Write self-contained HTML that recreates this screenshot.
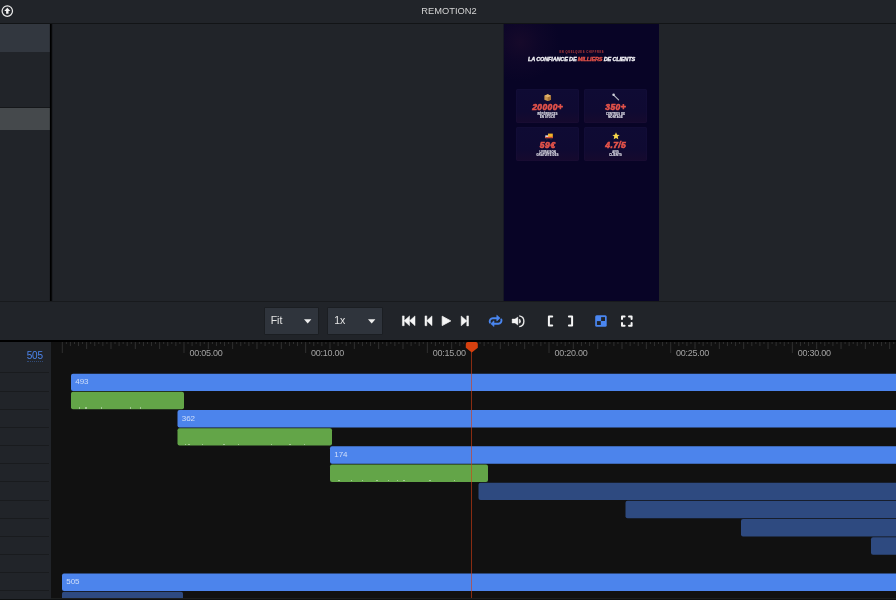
<!DOCTYPE html>
<html><head><meta charset="utf-8">
<style>
*{margin:0;padding:0;box-sizing:border-box}
html,body{width:896px;height:600px;overflow:hidden;background:#212429;font-family:"Liberation Sans",sans-serif}
.abs{position:absolute}
#top{position:absolute;left:0;top:0;width:896px;height:23px;background:#212429}
#topline{position:absolute;left:0;top:23px;width:896px;height:1px;background:#121416}
#title{position:absolute;left:1px;top:5.6px;width:896px;text-align:center;color:#d4d4d4;font-size:9.3px;line-height:10px}
#side{position:absolute;left:0;top:24px;width:50px;height:277px;background:#212429}
#vline{position:absolute;left:49px;top:24px;width:4px;height:277px;background:linear-gradient(90deg,rgba(0,0,0,0.13) 0,rgba(0,0,0,0.13) 1px,#000 1px,#000 2px,#08090a 2px,#08090a 3px,rgba(0,0,0,0.17) 3px,rgba(0,0,0,0.17) 4px)}
#sel1{position:absolute;left:0;top:24px;width:50px;height:28px;background:#32373f}
#hline2{position:absolute;left:0;top:107px;width:50px;height:1px;background:#15171a}
#sel2{position:absolute;left:0;top:108px;width:50px;height:22px;background:#45494c}
#ctlline{position:absolute;left:0;top:301px;width:896px;height:1px;background:#181a1d}

#preview{position:absolute;left:504px;top:24px;width:155px;height:277px;background:#080426;overflow:hidden}
#glow{position:absolute;left:-24px;top:-22px;width:80px;height:80px;border-radius:50%;background:radial-gradient(circle at center, rgba(34,14,46,0.55) 0%, rgba(26,11,46,0.3) 35%, rgba(8,4,38,0) 70%)}
#sub{position:absolute;left:0;top:26.5px;width:155px;text-align:center;color:rgba(214,71,63,0.8);font-size:2.6px;line-height:3px;font-weight:700;letter-spacing:0.6px;text-indent:0.6px;-webkit-text-stroke:0.05px #d6473f;transform:scaleX(1.0);will-change:transform}
#ttl{position:absolute;left:0;top:32px;width:155px;text-align:center;color:#f4f4f8;font-size:5.6px;line-height:6px;font-weight:700;font-style:italic;letter-spacing:-0.2px;white-space:nowrap;-webkit-text-stroke:0.3px currentColor;will-change:transform;transform:scaleY(1.04)}
.card{position:absolute;width:63px;height:34px;border-radius:2px;background:linear-gradient(180deg, rgba(15,11,52,1) 0%, rgba(15,10,50,1) 65%, rgba(22,10,46,1) 100%);box-shadow:inset 0 0 0 0.5px rgba(120,80,160,0.08)}
.emo{position:absolute}
.num{position:absolute;left:0;top:13.9px;width:63px;text-align:center;color:#e4534a;font-size:8.5px;line-height:8.5px;-webkit-text-stroke:0.6px #e4534a;will-change:transform;font-weight:700;font-style:italic;white-space:nowrap}
.lab{position:absolute;left:0;width:63px;text-align:center;color:#e6e6ee;font-size:2.6px;line-height:3px;font-weight:700;white-space:nowrap;letter-spacing:0.25px;text-indent:0.25px;-webkit-text-stroke:0.12px #e6e6ee;will-change:transform}

.dd{position:absolute;top:307.3px;width:55px;height:27.3px;background:#2f343c;border:1px solid #1b1e22;border-radius:1px;color:#e4e4e4;font-size:10.5px;line-height:24.3px;padding-left:6.2px}
.dd svg{position:absolute;right:6px;top:10.6px}
#tlline{position:absolute;left:0;top:340px;width:896px;height:2px;background:#000}
#tl{position:absolute;left:0;top:342px;width:896px;height:256px;background:#111;overflow:hidden}
#tlbottom{position:absolute;left:51px;top:598px;width:845px;height:1px;background:#1d1f1f}
#tlbottom2{position:absolute;left:0;top:599px;width:896px;height:1px;background:#0e1011}
#tlleft{position:absolute;left:0;top:342px;width:51px;height:257px;background:#212429}
.sep{position:absolute;left:0;width:48.5px;height:1px;background:#191b1e}
#ruler{position:absolute;left:0;top:342px}
.lbl{position:absolute;top:348px;color:#a3a3a3;font-size:9px;line-height:10px;letter-spacing:-0.25px}
.btxt{position:absolute;height:18px;font-size:8px;line-height:18px;color:rgba(255,255,255,0.72);white-space:nowrap}
.bar.b{background:#4c84ec}
.bar.g{background:#63a548}
.bar.d{background:#2e4a80}
#playline{position:absolute;left:471px;top:348px;width:1px;height:250px;background:rgba(210,62,20,0.62)}
#num505{position:absolute;left:26.8px;top:351px;color:#4c84ec;font-size:10px;line-height:10px;letter-spacing:-0.25px}
#num505 span{border-bottom:1px dotted rgba(76,132,236,0.4)}
</style></head><body><div id="wrap" style="position:absolute;left:0;top:0;width:896px;height:600px;will-change:transform">
<div id="top"></div>
<div id="topline"></div>
<div id="title">REMOTION2</div>
<svg class="abs" style="left:1px;top:5px" width="13" height="13" viewBox="0 0 13 13">
 <circle cx="6.3" cy="6.1" r="5.2" fill="none" stroke="#e8e8e8" stroke-width="1.25"/>
 <path d="M6.3 2.8 L9.4 5.9 L7.5 5.9 L7.5 8.8 L5.1 8.8 L5.1 5.9 L3.2 5.9 Z" fill="#f4f4f4"/>
</svg>
<div id="side"></div>
<div id="sel1"></div>
<div id="hline2"></div>
<div id="sel2"></div>
<div id="vline"></div>
<div id="ctlline"></div>
<div style="position:absolute;left:503px;top:24px;width:1px;height:277px;background:#171924"></div>
<div id="preview">
<div id="glow"></div>
<div id="sub">EN QUELQUES CHIFFRES</div>
<div id="ttl">LA CONFIANCE DE <span style="color:#e4534a">MILLIERS</span> DE CLIENTS</div>
<div class="card" style="left:12px;top:65px"><svg class="emo" style="left:28.4px;top:4.6px" width="7.4" height="7.4" viewBox="0 0 8 8"><path d="M4 0.3 L7.6 1.9 V6.1 L4 7.7 L0.4 6.1 V1.9Z" fill="#c9954f"/><path d="M4 3.5 L7.6 1.9 V6.1 L4 7.7Z" fill="#a87434"/><path d="M0.4 1.9 L4 0.3 L7.6 1.9 L4 3.5Z" fill="#e0b26a"/></svg>
<div class="num" style="letter-spacing:0.4px;text-indent:0.4px">20000+</div>
<div class="lab" style="top:23.7px">RÉFÉRENCES</div><div class="lab" style="top:27px">EN STOCK</div></div><div class="card" style="left:80px;top:65px"><svg class="emo" style="left:28px;top:4.4px" width="8" height="8" viewBox="0 0 8 8"><path d="M1.5 1.8 L6.6 6.9" stroke="#b9bcc6" stroke-width="1.1" stroke-linecap="round"/><circle cx="1.6" cy="1.8" r="1.3" fill="#cfd2da"/></svg>
<div class="num" style="letter-spacing:0.38px;text-indent:0.38px">350+</div>
<div class="lab" style="top:23.7px">CENTRES DE</div><div class="lab" style="top:27px">MONTAGE</div></div><div class="card" style="left:12px;top:103px"><svg class="emo" style="left:28.5px;top:5.6px" width="8" height="7" viewBox="0 0 8 7"><rect x="3" y="0.6" width="4.8" height="4.2" fill="#f0b429"/><path d="M0.3 2.4 H3.2 V4.9 H0.3Z" fill="#e8eef5"/><rect x="0.2" y="3.8" width="7.6" height="1.5" fill="#e04a35"/><circle cx="1.8" cy="5.7" r="0.9" fill="#333"/><circle cx="6" cy="5.7" r="0.9" fill="#333"/></svg>
<div class="num" style="letter-spacing:0.67px;text-indent:0.67px">59€</div>
<div class="lab" style="top:23.7px">LIVRAISON</div><div class="lab" style="top:27px">GRATUITE DÈS</div></div><div class="card" style="left:80px;top:103px"><svg class="emo" style="left:28px;top:4.6px" width="8" height="8" viewBox="0 0 8 8"><path d="M4 0.3 L5.1 2.7 L7.7 2.9 L5.7 4.6 L6.3 7.3 L4 5.9 L1.7 7.3 L2.3 4.6 L0.3 2.9 L2.9 2.7Z" fill="#f6d54a"/></svg>
<div class="num" style="letter-spacing:0.38px;text-indent:0.38px">4.7/5</div>
<div class="lab" style="top:23.7px">AVIS</div><div class="lab" style="top:27px">CLIENTS</div></div>
</div>

<div class="dd" style="left:263.5px">Fit<svg width="7.5" height="5"><path d="M0 0.2H7.4L3.7 4.4Z" fill="#eee"/></svg></div>
<div class="dd" style="left:327px;width:55.5px">1x<svg width="7.5" height="5"><path d="M0 0.2H7.4L3.7 4.4Z" fill="#eee"/></svg></div>

<svg class="abs" style="left:400px;top:313px" width="18" height="16" viewBox="0 0 18 16">
<path d="M2.4 2.9 H4.2 V12.7 H2.4Z M4.1 7.8 L9.5 2.9 V12.7Z M9.5 7.8 L15 2.9 V12.7Z" fill="#f5f5f5" stroke="#f5f5f5" stroke-width="0.5" stroke-linejoin="round"/></svg>
<svg class="abs" style="left:423px;top:313px" width="12" height="16" viewBox="0 0 12 16">
<path d="M2 2.9 H3.8 V12.7 H2Z M3.7 7.8 L9 2.9 V12.7Z" fill="#f5f5f5" stroke="#f5f5f5" stroke-width="0.5" stroke-linejoin="round"/></svg>
<svg class="abs" style="left:440px;top:313px" width="14" height="16" viewBox="0 0 14 16">
<path d="M2.2 3.2 L10.8 7.9 L2.2 12.6Z" fill="#f5f5f5" stroke="#f5f5f5" stroke-width="0.8" stroke-linejoin="round"/></svg>
<svg class="abs" style="left:459px;top:313px" width="12" height="16" viewBox="0 0 12 16">
<path d="M2.2 3 L7.9 7.9 L2.2 12.8Z M7.8 2.9 H9.5 V12.9 H7.8Z" fill="#f5f5f5" stroke="#f5f5f5" stroke-width="0.5" stroke-linejoin="round"/></svg>
<svg class="abs" style="left:486px;top:312px" width="20" height="18" viewBox="0 0 20 18">
<path d="M11.5 6.2 H7 A3.2 3.2 0 0 0 3.9 10.6" fill="none" stroke="#4a86f0" stroke-width="1.9" stroke-linecap="round"/>
<path d="M10.8 3.2 L14.1 6.1 L10.8 9Z" fill="#4a86f0" stroke="#4a86f0" stroke-width="0.6" stroke-linejoin="round"/>
<path d="M7.6 11.7 H12.2 A3.2 3.2 0 0 0 15.3 7.4" fill="none" stroke="#4a86f0" stroke-width="1.9" stroke-linecap="round"/>
<path d="M8 8.8 L4.8 11.7 L8 14.6Z" fill="#4a86f0" stroke="#4a86f0" stroke-width="0.6" stroke-linejoin="round"/>
</svg>
<svg class="abs" style="left:508px;top:312px" width="20" height="18" viewBox="0 0 20 18">
<path d="M4.1 7 H7 L9.9 5 V13.1 L7 11 H4.1Z" fill="#f5f5f5" stroke="#f5f5f5" stroke-width="0.4" stroke-linejoin="round"/>
<path d="M10.9 6.7 A2.5 2.5 0 0 1 10.9 11.6Z" fill="#d8d8d8"/>
<path d="M11.2 3.9 A5.4 5.4 0 0 1 11.2 14.6" fill="none" stroke="#e8e8e8" stroke-width="1.4"/>
</svg>
<svg class="abs" style="left:545px;top:312px" width="32" height="18" viewBox="0 0 32 18">
<path d="M7.2 4.4 H3.9 V13.6 H7.2" fill="none" stroke="#f5f5f5" stroke-width="2" stroke-linecap="round" stroke-linejoin="round"/>
<path d="M23.9 4.4 H27.1 V13.6 H23.9" fill="none" stroke="#f5f5f5" stroke-width="2" stroke-linecap="round" stroke-linejoin="round"/>
</svg>
<svg class="abs" style="left:592px;top:312px" width="18" height="18" viewBox="0 0 18 18">
<rect x="3.2" y="3.2" width="11.5" height="11.5" rx="1.5" fill="#4a86f0"/>
<rect x="9.1" y="5.1" width="3.9" height="3.9" fill="#212429"/>
<rect x="4.9" y="9.1" width="3.9" height="3.9" fill="#212429"/>
</svg>
<svg class="abs" style="left:618px;top:312px" width="18" height="18" viewBox="0 0 18 18">
<path d="M4 7 V4.4 H6.6 M11 4.4 H13.6 V7 M13.6 11 V13.7 H11 M6.6 13.7 H4 V11" fill="none" stroke="#f5f5f5" stroke-width="2" stroke-linecap="round" stroke-linejoin="round"/>
</svg>
<div id="tlline"></div>
<div id="tl"></div>
<div id="tlleft"></div>
<div class="sep" style="top:372.4px"></div><div class="sep" style="top:390.6px"></div><div class="sep" style="top:408.7px"></div><div class="sep" style="top:426.9px"></div><div class="sep" style="top:445.1px"></div><div class="sep" style="top:463.2px"></div><div class="sep" style="top:481.4px"></div><div class="sep" style="top:499.6px"></div><div class="sep" style="top:517.8px"></div><div class="sep" style="top:535.9px"></div><div class="sep" style="top:554.1px"></div><div class="sep" style="top:572.3px"></div><div class="sep" style="top:590.4px"></div>
<div id="num505"><span>505</span></div>
<svg id="ruler" width="896" height="12" fill="#303030"><rect x="61.80" y="0" width="1" height="11"/><rect x="65.86" y="0" width="1" height="2"/><rect x="69.91" y="0" width="1" height="4"/><rect x="73.97" y="0" width="1" height="2"/><rect x="78.02" y="0" width="1" height="4"/><rect x="82.08" y="0" width="1" height="2"/><rect x="86.13" y="0" width="1" height="7"/><rect x="90.19" y="0" width="1" height="2"/><rect x="94.25" y="0" width="1" height="4"/><rect x="98.30" y="0" width="1" height="2"/><rect x="102.36" y="0" width="1" height="4"/><rect x="106.41" y="0" width="1" height="2"/><rect x="110.47" y="0" width="1" height="7"/><rect x="114.53" y="0" width="1" height="2"/><rect x="118.58" y="0" width="1" height="4"/><rect x="122.64" y="0" width="1" height="2"/><rect x="126.69" y="0" width="1" height="4"/><rect x="130.75" y="0" width="1" height="2"/><rect x="134.81" y="0" width="1" height="7"/><rect x="138.86" y="0" width="1" height="2"/><rect x="142.92" y="0" width="1" height="4"/><rect x="146.97" y="0" width="1" height="2"/><rect x="151.03" y="0" width="1" height="4"/><rect x="155.08" y="0" width="1" height="2"/><rect x="159.14" y="0" width="1" height="7"/><rect x="163.20" y="0" width="1" height="2"/><rect x="167.25" y="0" width="1" height="4"/><rect x="171.31" y="0" width="1" height="2"/><rect x="175.36" y="0" width="1" height="4"/><rect x="179.42" y="0" width="1" height="2"/><rect x="183.47" y="0" width="1" height="11"/><rect x="187.53" y="0" width="1" height="2"/><rect x="191.59" y="0" width="1" height="4"/><rect x="195.64" y="0" width="1" height="2"/><rect x="199.70" y="0" width="1" height="4"/><rect x="203.75" y="0" width="1" height="2"/><rect x="207.81" y="0" width="1" height="7"/><rect x="211.87" y="0" width="1" height="2"/><rect x="215.92" y="0" width="1" height="4"/><rect x="219.98" y="0" width="1" height="2"/><rect x="224.03" y="0" width="1" height="4"/><rect x="228.09" y="0" width="1" height="2"/><rect x="232.14" y="0" width="1" height="7"/><rect x="236.20" y="0" width="1" height="2"/><rect x="240.26" y="0" width="1" height="4"/><rect x="244.31" y="0" width="1" height="2"/><rect x="248.37" y="0" width="1" height="4"/><rect x="252.42" y="0" width="1" height="2"/><rect x="256.48" y="0" width="1" height="7"/><rect x="260.54" y="0" width="1" height="2"/><rect x="264.59" y="0" width="1" height="4"/><rect x="268.65" y="0" width="1" height="2"/><rect x="272.70" y="0" width="1" height="4"/><rect x="276.76" y="0" width="1" height="2"/><rect x="280.81" y="0" width="1" height="7"/><rect x="284.87" y="0" width="1" height="2"/><rect x="288.93" y="0" width="1" height="4"/><rect x="292.98" y="0" width="1" height="2"/><rect x="297.04" y="0" width="1" height="4"/><rect x="301.09" y="0" width="1" height="2"/><rect x="305.15" y="0" width="1" height="11"/><rect x="309.21" y="0" width="1" height="2"/><rect x="313.26" y="0" width="1" height="4"/><rect x="317.32" y="0" width="1" height="2"/><rect x="321.37" y="0" width="1" height="4"/><rect x="325.43" y="0" width="1" height="2"/><rect x="329.49" y="0" width="1" height="7"/><rect x="333.54" y="0" width="1" height="2"/><rect x="337.60" y="0" width="1" height="4"/><rect x="341.65" y="0" width="1" height="2"/><rect x="345.71" y="0" width="1" height="4"/><rect x="349.76" y="0" width="1" height="2"/><rect x="353.82" y="0" width="1" height="7"/><rect x="357.88" y="0" width="1" height="2"/><rect x="361.93" y="0" width="1" height="4"/><rect x="365.99" y="0" width="1" height="2"/><rect x="370.04" y="0" width="1" height="4"/><rect x="374.10" y="0" width="1" height="2"/><rect x="378.15" y="0" width="1" height="7"/><rect x="382.21" y="0" width="1" height="2"/><rect x="386.27" y="0" width="1" height="4"/><rect x="390.32" y="0" width="1" height="2"/><rect x="394.38" y="0" width="1" height="4"/><rect x="398.43" y="0" width="1" height="2"/><rect x="402.49" y="0" width="1" height="7"/><rect x="406.55" y="0" width="1" height="2"/><rect x="410.60" y="0" width="1" height="4"/><rect x="414.66" y="0" width="1" height="2"/><rect x="418.71" y="0" width="1" height="4"/><rect x="422.77" y="0" width="1" height="2"/><rect x="426.82" y="0" width="1" height="11"/><rect x="430.88" y="0" width="1" height="2"/><rect x="434.94" y="0" width="1" height="4"/><rect x="438.99" y="0" width="1" height="2"/><rect x="443.05" y="0" width="1" height="4"/><rect x="447.10" y="0" width="1" height="2"/><rect x="451.16" y="0" width="1" height="7"/><rect x="455.22" y="0" width="1" height="2"/><rect x="459.27" y="0" width="1" height="4"/><rect x="463.33" y="0" width="1" height="2"/><rect x="467.38" y="0" width="1" height="4"/><rect x="471.44" y="0" width="1" height="2"/><rect x="475.50" y="0" width="1" height="7"/><rect x="479.55" y="0" width="1" height="2"/><rect x="483.61" y="0" width="1" height="4"/><rect x="487.66" y="0" width="1" height="2"/><rect x="491.72" y="0" width="1" height="4"/><rect x="495.77" y="0" width="1" height="2"/><rect x="499.83" y="0" width="1" height="7"/><rect x="503.89" y="0" width="1" height="2"/><rect x="507.94" y="0" width="1" height="4"/><rect x="512.00" y="0" width="1" height="2"/><rect x="516.05" y="0" width="1" height="4"/><rect x="520.11" y="0" width="1" height="2"/><rect x="524.16" y="0" width="1" height="7"/><rect x="528.22" y="0" width="1" height="2"/><rect x="532.28" y="0" width="1" height="4"/><rect x="536.33" y="0" width="1" height="2"/><rect x="540.39" y="0" width="1" height="4"/><rect x="544.44" y="0" width="1" height="2"/><rect x="548.50" y="0" width="1" height="11"/><rect x="552.56" y="0" width="1" height="2"/><rect x="556.61" y="0" width="1" height="4"/><rect x="560.67" y="0" width="1" height="2"/><rect x="564.72" y="0" width="1" height="4"/><rect x="568.78" y="0" width="1" height="2"/><rect x="572.83" y="0" width="1" height="7"/><rect x="576.89" y="0" width="1" height="2"/><rect x="580.95" y="0" width="1" height="4"/><rect x="585.00" y="0" width="1" height="2"/><rect x="589.06" y="0" width="1" height="4"/><rect x="593.11" y="0" width="1" height="2"/><rect x="597.17" y="0" width="1" height="7"/><rect x="601.23" y="0" width="1" height="2"/><rect x="605.28" y="0" width="1" height="4"/><rect x="609.34" y="0" width="1" height="2"/><rect x="613.39" y="0" width="1" height="4"/><rect x="617.45" y="0" width="1" height="2"/><rect x="621.50" y="0" width="1" height="7"/><rect x="625.56" y="0" width="1" height="2"/><rect x="629.62" y="0" width="1" height="4"/><rect x="633.67" y="0" width="1" height="2"/><rect x="637.73" y="0" width="1" height="4"/><rect x="641.78" y="0" width="1" height="2"/><rect x="645.84" y="0" width="1" height="7"/><rect x="649.90" y="0" width="1" height="2"/><rect x="653.95" y="0" width="1" height="4"/><rect x="658.01" y="0" width="1" height="2"/><rect x="662.06" y="0" width="1" height="4"/><rect x="666.12" y="0" width="1" height="2"/><rect x="670.17" y="0" width="1" height="11"/><rect x="674.23" y="0" width="1" height="2"/><rect x="678.29" y="0" width="1" height="4"/><rect x="682.34" y="0" width="1" height="2"/><rect x="686.40" y="0" width="1" height="4"/><rect x="690.45" y="0" width="1" height="2"/><rect x="694.51" y="0" width="1" height="7"/><rect x="698.57" y="0" width="1" height="2"/><rect x="702.62" y="0" width="1" height="4"/><rect x="706.68" y="0" width="1" height="2"/><rect x="710.73" y="0" width="1" height="4"/><rect x="714.79" y="0" width="1" height="2"/><rect x="718.84" y="0" width="1" height="7"/><rect x="722.90" y="0" width="1" height="2"/><rect x="726.96" y="0" width="1" height="4"/><rect x="731.01" y="0" width="1" height="2"/><rect x="735.07" y="0" width="1" height="4"/><rect x="739.12" y="0" width="1" height="2"/><rect x="743.18" y="0" width="1" height="7"/><rect x="747.24" y="0" width="1" height="2"/><rect x="751.29" y="0" width="1" height="4"/><rect x="755.35" y="0" width="1" height="2"/><rect x="759.40" y="0" width="1" height="4"/><rect x="763.46" y="0" width="1" height="2"/><rect x="767.51" y="0" width="1" height="7"/><rect x="771.57" y="0" width="1" height="2"/><rect x="775.63" y="0" width="1" height="4"/><rect x="779.68" y="0" width="1" height="2"/><rect x="783.74" y="0" width="1" height="4"/><rect x="787.79" y="0" width="1" height="2"/><rect x="791.85" y="0" width="1" height="11"/><rect x="795.91" y="0" width="1" height="2"/><rect x="799.96" y="0" width="1" height="4"/><rect x="804.02" y="0" width="1" height="2"/><rect x="808.07" y="0" width="1" height="4"/><rect x="812.13" y="0" width="1" height="2"/><rect x="816.18" y="0" width="1" height="7"/><rect x="820.24" y="0" width="1" height="2"/><rect x="824.30" y="0" width="1" height="4"/><rect x="828.35" y="0" width="1" height="2"/><rect x="832.41" y="0" width="1" height="4"/><rect x="836.46" y="0" width="1" height="2"/><rect x="840.52" y="0" width="1" height="7"/><rect x="844.58" y="0" width="1" height="2"/><rect x="848.63" y="0" width="1" height="4"/><rect x="852.69" y="0" width="1" height="2"/><rect x="856.74" y="0" width="1" height="4"/><rect x="860.80" y="0" width="1" height="2"/><rect x="864.85" y="0" width="1" height="7"/><rect x="868.91" y="0" width="1" height="2"/><rect x="872.97" y="0" width="1" height="4"/><rect x="877.02" y="0" width="1" height="2"/><rect x="881.08" y="0" width="1" height="4"/><rect x="885.13" y="0" width="1" height="2"/><rect x="889.19" y="0" width="1" height="7"/><rect x="893.25" y="0" width="1" height="2"/><rect x="897.30" y="0" width="1" height="4"/></svg>
<div class="lbl" style="left:189.4px">00:05.00</div><div class="lbl" style="left:311.1px">00:10.00</div><div class="lbl" style="left:432.7px">00:15.00</div><div class="lbl" style="left:554.4px">00:20.00</div><div class="lbl" style="left:676.1px">00:25.00</div><div class="lbl" style="left:797.8px">00:30.00</div>
<svg style="position:absolute;left:0;top:342px" width="896" height="256"><rect x="71" y="31.65" width="929" height="17.45" rx="2" fill="#4c84ec"/><rect x="71" y="49.82" width="113" height="17.45" rx="2" fill="#63a548"/><rect x="177.5" y="67.99" width="822.5" height="17.45" rx="2" fill="#4c84ec"/><rect x="177.5" y="86.16" width="154.5" height="17.45" rx="2" fill="#63a548"/><rect x="330" y="104.33" width="670" height="17.45" rx="2" fill="#4c84ec"/><rect x="330" y="122.50" width="158" height="17.45" rx="2" fill="#63a548"/><rect x="478.5" y="140.67" width="521.5" height="17.45" rx="2" fill="#2e4a80"/><rect x="625.5" y="158.84" width="374.5" height="17.45" rx="2" fill="#2e4a80"/><rect x="741" y="177.01" width="259" height="17.45" rx="2" fill="#2e4a80"/><rect x="871" y="195.18" width="129" height="17.45" rx="2" fill="#2e4a80"/><rect x="62" y="231.52" width="938" height="17.45" rx="2" fill="#4c84ec"/><rect x="62" y="249.69" width="121" height="17.45" rx="2" fill="#2e4a80"/></svg><div class="btxt" style="left:75.2px;top:373.3px">493</div><div class="btxt" style="left:181.7px;top:409.7px">362</div><div class="btxt" style="left:334.2px;top:446.0px">174</div><div class="btxt" style="left:66.2px;top:573.2px">505</div>
<div style="position:absolute;left:78.8px;top:407.4px;width:1.6px;height:1.4px;background:rgba(255,255,255,0.42)"></div><div style="position:absolute;left:85.0px;top:407.4px;width:1.6px;height:1.4px;background:rgba(255,255,255,0.42)"></div><div style="position:absolute;left:100.6px;top:407.4px;width:1.6px;height:1.4px;background:rgba(255,255,255,0.42)"></div><div style="position:absolute;left:129.5px;top:407.4px;width:1.6px;height:1.4px;background:rgba(255,255,255,0.42)"></div><div style="position:absolute;left:139.7px;top:407.4px;width:1.6px;height:1.4px;background:rgba(255,255,255,0.42)"></div><div style="position:absolute;left:184.8px;top:443.7px;width:1.6px;height:1.4px;background:rgba(255,255,255,0.42)"></div><div style="position:absolute;left:188.4px;top:443.7px;width:1.6px;height:1.4px;background:rgba(255,255,255,0.42)"></div><div style="position:absolute;left:201.8px;top:443.7px;width:1.6px;height:1.4px;background:rgba(255,255,255,0.42)"></div><div style="position:absolute;left:223.0px;top:443.7px;width:1.6px;height:1.4px;background:rgba(255,255,255,0.42)"></div><div style="position:absolute;left:237.5px;top:443.7px;width:1.6px;height:1.4px;background:rgba(255,255,255,0.42)"></div><div style="position:absolute;left:270.5px;top:443.7px;width:1.6px;height:1.4px;background:rgba(255,255,255,0.42)"></div><div style="position:absolute;left:289.0px;top:443.7px;width:1.6px;height:1.4px;background:rgba(255,255,255,0.42)"></div><div style="position:absolute;left:303.6px;top:443.7px;width:1.6px;height:1.4px;background:rgba(255,255,255,0.42)"></div><div style="position:absolute;left:338.0px;top:480.1px;width:1.6px;height:1.4px;background:rgba(255,255,255,0.42)"></div><div style="position:absolute;left:350.6px;top:480.1px;width:1.6px;height:1.4px;background:rgba(255,255,255,0.42)"></div><div style="position:absolute;left:361.5px;top:480.1px;width:1.6px;height:1.4px;background:rgba(255,255,255,0.42)"></div><div style="position:absolute;left:376.0px;top:480.1px;width:1.6px;height:1.4px;background:rgba(255,255,255,0.42)"></div><div style="position:absolute;left:387.7px;top:480.1px;width:1.6px;height:1.4px;background:rgba(255,255,255,0.42)"></div><div style="position:absolute;left:396.7px;top:480.1px;width:1.6px;height:1.4px;background:rgba(255,255,255,0.42)"></div><div style="position:absolute;left:403.0px;top:480.1px;width:1.6px;height:1.4px;background:rgba(255,255,255,0.42)"></div><div style="position:absolute;left:429.0px;top:480.1px;width:1.6px;height:1.4px;background:rgba(255,255,255,0.42)"></div><div style="position:absolute;left:453.7px;top:480.1px;width:1.6px;height:1.4px;background:rgba(255,255,255,0.42)"></div>
<div id="playline"></div>
<svg class="abs" style="left:465px;top:342px" width="14" height="11" viewBox="0 0 14 11"><path d="M0.8 2 Q0.8 0 2.8 0 H10.8 Q12.8 0 12.8 2 V5.8 L6.8 10.5 L0.8 5.8Z" fill="#d6400f"/></svg>
<div id="tlbottom"></div><div id="tlbottom2"></div>
</div></body></html>
